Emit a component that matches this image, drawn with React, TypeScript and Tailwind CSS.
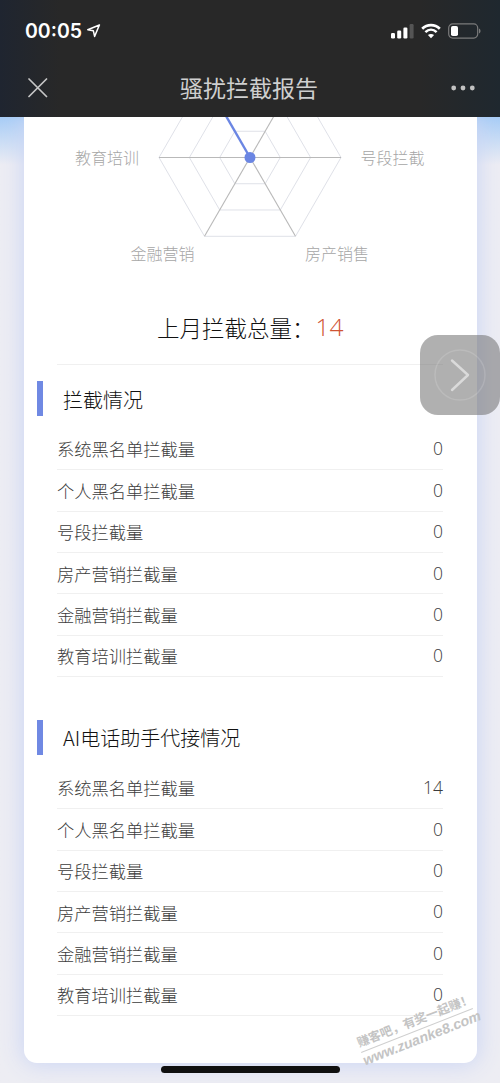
import React from 'react';

interface Item {
  label: string;
  count: number;
}

const labels = [
  '系统黑名单拦截量',
  '个人黑名单拦截量',
  '号段拦截量',
  '房产营销拦截量',
  '金融营销拦截量',
  '教育培训拦截量',
];

const blocked: Item[] = labels.map((label) => ({ label, count: 0 }));
const answered: Item[] = labels.map((label, i) => ({ label, count: i === 0 ? 14 : 0 }));

const StatusBar: React.FC = () => (
  <div className="flex h-[60px] items-center justify-between pl-[25px] pr-[19px] pt-[2px]">
    <div className="flex items-center gap-[5px]">
      <span className="pt-[1px] font-['Inter','Liberation_Sans',sans-serif] text-[19.5px] font-semibold leading-none text-white">00:05</span>
      <svg width="14" height="14" viewBox="0 0 14 14" fill="none" stroke="white" strokeWidth="1.5" strokeLinejoin="round">
        <path d="M12.4 1 L0.8 5.8 L6.3 6.7 L7.6 12.4 Z" />
      </svg>
    </div>
    <div className="flex items-center gap-[7px]">
      <svg width="23" height="16" viewBox="0 0 23 16" fill="white">
        <rect x="0" y="10" width="4" height="5.5" rx="1.2" />
        <rect x="6.2" y="7.5" width="4" height="8" rx="1.2" />
        <rect x="12.4" y="4.5" width="4" height="11" rx="1.2" />
        <rect x="18.6" y="1" width="4" height="14.5" rx="1.2" fill="#555" />
      </svg>
      <svg width="20" height="16" viewBox="0 0 20 16" fill="none" stroke="white">
        <path d="M1.2 5.7 C6.2 0.8 13.8 0.8 18.8 5.7" strokeWidth="2.7" />
        <path d="M4.4 9.1 C7.7 6 12.3 6 15.6 9.1" strokeWidth="2.6" />
        <path d="M10 15.2 L6.9 12.1 C8.7 10.5 11.3 10.5 13.1 12.1 Z" fill="white" stroke="none" />
      </svg>
      <svg width="33" height="16" viewBox="0 0 33 16">
        <rect x="0.7" y="0.9" width="29" height="14.2" rx="4" fill="none" stroke="#7b7b7b" strokeWidth="1.2" />
        <rect x="3" y="3" width="7" height="10" rx="1.8" fill="white" />
        <path d="M31 5.5 C33 6.3 33 9.7 31 10.5 Z" fill="#7b7b7b" />
      </svg>
    </div>
  </div>
);

const NavBar: React.FC = () => (
  <div className="flex h-[56px] items-center justify-between pl-[28px] pr-[25px]">
    <svg width="20" height="20" viewBox="0 0 20 20" stroke="#c6c6c6" strokeWidth="1.7" strokeLinecap="round">
      <path d="M1 1 L18.5 18.5 M18.5 1 L1 18.5" />
    </svg>
    <h1 className="pb-[1px] pr-[1px] text-[23px] leading-none text-[#cfcfcf]">骚扰拦截报告</h1>
    <svg width="24" height="6" viewBox="0 0 24 6" fill="#c2c2c2">
      <circle cx="2.7" cy="3" r="2.4" />
      <circle cx="12" cy="3" r="2.4" />
      <circle cx="21.3" cy="3" r="2.4" />
    </svg>
  </div>
);

// Points of a flat hexagon around the chart centre
const hexagon = (r: number) =>
  [0, 60, 120, 180, 240, 300]
    .map((a) => {
      const t = (a * Math.PI) / 180;
      return `${226 + r * Math.cos(t)},${40.5 + r * Math.sin(t)}`;
    })
    .join(' ');

const RadarChart: React.FC = () => (
  <svg width="453" height="170" viewBox="0 0 453 170" className="block shrink-0">
    <g fill="none" stroke="#dfe1e8" strokeWidth="1">
      <polygon points={hexagon(30.3)} />
      <polygon points={hexagon(60.6)} />
      <polygon points={hexagon(91)} />
    </g>
    <g stroke="#b9b9b9" strokeWidth="1.1">
      <path d="M135 40.5 H317" />
      <path d="M180.5 119.3 L271.5 -38.3" />
      <path d="M226 40.5 L271.5 119.3" />
    </g>
    <path d="M226 40.5 L180.5 -38.3" stroke="#6b86e3" strokeWidth="2.4" />
    <circle cx="226" cy="40.5" r="5.5" fill="#6b86e3" />
    <g fill="#a6a6a6" fontSize="16" fontWeight="300">
      <text x="51" y="46.5">教育培训</text>
      <text x="336.5" y="46.5">号段拦截</text>
      <text x="106.5" y="142.5">金融营销</text>
      <text x="281" y="142.5">房产销售</text>
    </g>
  </svg>
);

interface SectionProps {
  title: string;
  items: Item[];
}

const Section: React.FC<SectionProps> = ({ title, items }) => (
  <section>
    <div className="flex h-[35px] items-center pl-[13px]">
      <span className="h-[35px] w-[6px] bg-[#7089e3]" />
      <h2 className="pl-[20px] pt-[2px] text-[20px] font-light leading-none text-[#111]">{title}</h2>
    </div>
    <ul className="ml-[33px] mr-[34px] mt-[12.9px]">
      {items.map(({ label, count }) => (
        <li key={label} className="flex h-[41.4px] items-center justify-between border-b border-[#f0f0f0]">
          <span className="text-[17.25px] font-light leading-none text-[#3c3c3c]">{label}</span>
          <span className="font-['Open_Sans','Noto_Sans',sans-serif] text-[17.5px] font-light leading-none text-[#3c3c3c]">{count}</span>
        </li>
      ))}
    </ul>
  </section>
);

const App: React.FC = () => (
  <div className="relative h-[1083px] w-[500px] overflow-hidden bg-[#ededf3] font-['Noto_Sans_CJK_SC',sans-serif]">
    <header className="relative z-10 h-[117px] bg-[linear-gradient(to_right,#1f2530,#282828_12%,#282828_84%,#1f282f)]">
      <StatusBar />
      <NavBar />
    </header>

    <main className="h-[966px] bg-linear-to-b from-[#a6ccf6] to-[#ededf3] to-[48px] px-[24px]">
      <div className="flex h-[945.5px] w-[453px] flex-col rounded-b-[13px] bg-white shadow-[0_0_22px_2px_#ccd6f4]">
        <RadarChart />
        <p className="mt-[28px] flex h-[24px] items-center pl-[133px] text-[22.5px] font-light leading-none text-[#111]">
          上月拦截总量：
          <span className="pl-px font-['Open_Sans','Noto_Sans',sans-serif] text-[24.5px] font-light text-[#cf5434]">14</span>
        </p>
        <hr className="ml-[33px] mr-[34px] mt-[25px] mb-[16px] border-[#f0f0f0]" />
        <Section title="拦截情况" items={blocked} />
        <div className="h-[42.7px] shrink-0" />
        <Section title="AI电话助手代接情况" items={answered} />
      </div>
    </main>

    {/* floating assist button */}
    <button className="absolute left-[420px] top-[335px] z-20 flex h-[80px] w-[80px] items-center justify-center rounded-[18px] bg-[#6f6f6f]/55">
      <svg width="52" height="52" viewBox="0 0 52 52" fill="none">
        <circle cx="26" cy="26" r="25" stroke="white" strokeOpacity="0.14" strokeWidth="1.5" />
        <path d="M18 11.5 L34 26 L18 41" stroke="#dadada" strokeWidth="2.4" strokeLinecap="round" strokeLinejoin="round" />
      </svg>
    </button>

    {/* watermark */}
    <div className="absolute left-[357px] top-[1014px] z-20 w-[120px] -rotate-[21.5deg] text-[#c4c4c4]">
      <div className="whitespace-nowrap border-b border-[#cfcfcf] pb-[3px] text-[12.3px] font-bold leading-[13px]">赚客吧，有奖一起赚！</div>
      <div className="-ml-px font-['Liberation_Sans',sans-serif] text-[14.2px] font-bold italic leading-[16px]">www.zuanke8.com</div>
    </div>

    <div className="absolute bottom-[10.5px] left-[161px] z-20 h-[7px] w-[179px] rounded-full bg-[#101010]" />
  </div>
);

export default App;
